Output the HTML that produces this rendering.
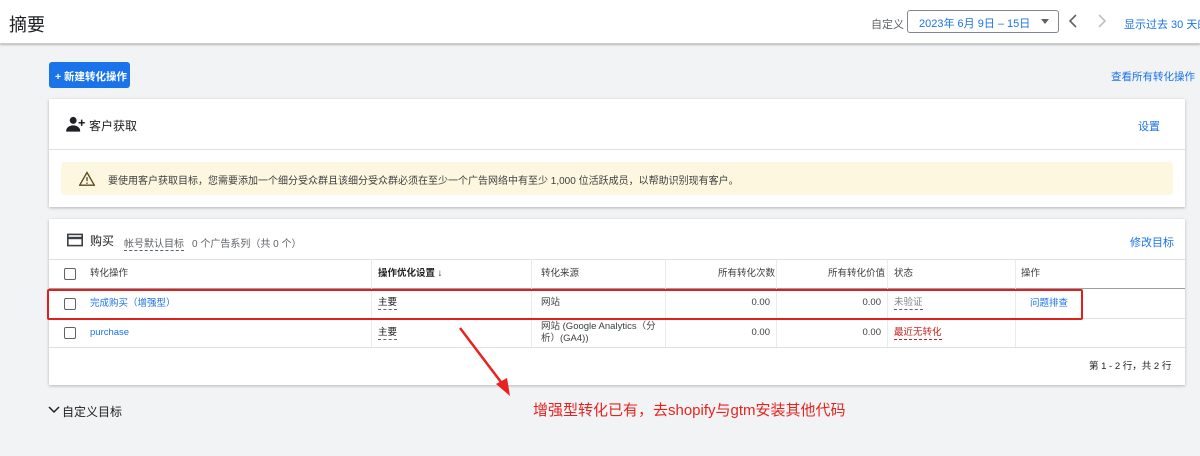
<!DOCTYPE html><html><head><meta charset="utf-8"><style>
*{box-sizing:border-box;margin:0;padding:0}
body{width:1200px;height:456px;overflow:hidden;background:#f1f3f4;font-family:"Liberation Sans","Noto Sans CJK SC",sans-serif;color:#3c4043;position:relative;font-size:12px}
.a{position:absolute}
.hdr{left:0;top:0;width:1200px;height:44px;background:#fff;border-bottom:1px solid #ccc;box-shadow:0 1px 2px rgba(0,0,0,.25)}
.blue{color:#1a73e8}
.card{background:#fff;box-shadow:0 1px 3px rgba(0,0,0,.25)}
.cb{width:12px;height:12px;border:1.5px solid #5f6368;border-radius:2px}
.vl{width:1px;background:#e8eaed}
.hl{height:1px;background:#e0e0e0}
.dot{border-bottom:1px dashed #5f6368}
.t{line-height:12px}
</style></head><body>
<div class="a hdr"></div>
<div class="a" style="left:9px;top:11px;font-size:18px;color:#202124">摘要</div>
<div class="a" style="left:871px;top:16px;font-size:11px;color:#5f6368">自定义</div>
<div class="a" style="left:907px;top:10px;width:152px;height:23px;border:1px solid #80868b;border-radius:3px;font-size:11px;color:#1a73e8;padding:4px 0 0 11px">2023年 6月 9日 – 15日<svg style="position:absolute;right:9px;top:8px" width="8" height="5"><path d="M0 0h8L4 5z" fill="#5f6368"/></svg></div>
<svg class="a" style="left:1068px;top:14px" width="10" height="14"><path d="M8 1L2 7l6 6" fill="none" stroke="#5f6368" stroke-width="1.6"/></svg>
<svg class="a" style="left:1097px;top:14px" width="10" height="14"><path d="M2 1l6 6-6 6" fill="none" stroke="#bdc1c6" stroke-width="1.6"/></svg>
<div class="a blue" style="left:1124px;top:16px;font-size:11px;white-space:nowrap">显示过去 30 天的</div>
<div class="a" style="left:49px;top:62px;width:81px;height:26px;background:#1a73e8;border-radius:3px;color:#fff;font-size:10.5px;padding:7px 0 0 6px;font-weight:bold">+ 新建转化操作</div>
<div class="a blue" style="left:1111px;top:69px;font-size:10.5px">查看所有转化操作</div>
<div class="a card" style="left:49px;top:99px;width:1136px;height:108px">
 <div class="a" style="left:17px;top:16px"><svg width="19" height="17" viewBox="0 0 24 22"><circle cx="9" cy="7" r="4.5" fill="#202124"/><path d="M0 20c0-4 5-6.5 9-6.5s9 2.5 9 6.5v1.5H0z" fill="#202124"/><path d="M19 6v3h-3v2h3v3h2v-3h3V9h-3V6z" fill="#202124"/></svg></div>
 <div class="a" style="left:40px;top:18px;font-size:12px;color:#202124">客户获取</div>
 <div class="a blue" style="left:1089px;top:19px;font-size:11px">设置</div>
 <div class="a hl" style="left:0;top:50px;width:1136px"></div>
 <div class="a" style="left:12px;top:63px;width:1112px;height:33px;background:#fef7e0;border-radius:4px"></div>
 <div class="a" style="left:30px;top:72px"><svg width="16" height="15" viewBox="0 0 24 22"><path d="M12 2L1 21h22z" fill="none" stroke="#5c4a1c" stroke-width="2"/><path d="M11 9h2v6h-2zM11 17h2v2h-2z" fill="#5c4a1c"/></svg></div>
 <div class="a" style="left:59px;top:73px;font-size:10px;color:#3c4043;white-space:nowrap">要使用客户获取目标，您需要添加一个细分受众群且该细分受众群必须在至少一个广告网络中有至少 1,000 位活跃成员，以帮助识别现有客户。</div>
</div>
<div class="a card" style="left:49px;top:219px;width:1136px;height:166px">
 <div class="a" style="left:18px;top:14px"><svg width="16" height="14" viewBox="0 0 20 16"><rect x="1" y="1" width="18" height="14" fill="none" stroke="#3c4043" stroke-width="2"/><rect x="1" y="4" width="18" height="3" fill="#3c4043"/></svg></div>
 <div class="a" style="left:41px;top:13px;font-size:12px;color:#202124">购买</div>
 <div class="a dot" style="left:75px;top:16px;font-size:10px;color:#5f6368">帐号默认目标</div>
 <div class="a" style="left:143px;top:16px;font-size:10px;color:#5f6368">0 个广告系列（共 0 个）</div>
 <div class="a blue" style="left:1081px;top:15px;font-size:11px">修改目标</div>
 <div class="a hl" style="left:0;top:40px;width:1136px"></div>
 <div class="a hl" style="left:0;top:69px;width:1136px;background:#9aa0a6"></div>
 <div class="a hl" style="left:0;top:99px;width:1136px"></div>
 <div class="a hl" style="left:0;top:128px;width:1136px"></div>
 <div class="a vl" style="left:322px;top:40px;height:88px"></div>
 <div class="a vl" style="left:482px;top:40px;height:88px"></div>
 <div class="a vl" style="left:616px;top:40px;height:88px"></div>
 <div class="a vl" style="left:727px;top:40px;height:88px"></div>
 <div class="a vl" style="left:838px;top:40px;height:88px"></div>
 <div class="a vl" style="left:966px;top:40px;height:88px"></div>
 <div class="a cb" style="left:15px;top:49px"></div>
 <div class="a cb" style="left:15px;top:79px"></div>
 <div class="a cb" style="left:15px;top:108px"></div>
 <div style="font-size:9.5px">
 <div class="a t" style="left:41px;top:49px">转化操作</div>
 <div class="a t" style="left:329px;top:49px;font-weight:bold;color:#202124">操作优化设置 ↓</div>
 <div class="a t" style="left:492px;top:49px">转化来源</div>
 <div class="a t" style="left:669px;top:49px">所有转化次数</div>
 <div class="a t" style="left:779px;top:49px">所有转化价值</div>
 <div class="a t" style="left:845px;top:49px">状态</div>
 <div class="a t" style="left:972px;top:49px">操作</div>
 <div class="a t blue" style="left:41px;top:79px">完成购买（增强型）</div>
 <div class="a t dot" style="left:329px;top:78px;color:#202124">主要</div>
 <div class="a t" style="left:492px;top:78px">网站</div>
 <div class="a t" style="left:672px;top:78px;width:49px;text-align:right">0.00</div>
 <div class="a t" style="left:782px;top:78px;width:50px;text-align:right">0.00</div>
 <div class="a t dot" style="left:845px;top:78px;color:#80868b">未验证</div>
 <div class="a t blue" style="left:981px;top:79px">问题排查</div>
 <div class="a t blue" style="left:41px;top:108px">purchase</div>
 <div class="a t dot" style="left:329px;top:108px;color:#202124">主要</div>
 <div class="a t" style="left:492px;top:102px">网站 (Google Analytics（分<br>析）(GA4))</div>
 <div class="a t" style="left:672px;top:108px;width:49px;text-align:right">0.00</div>
 <div class="a t" style="left:782px;top:108px;width:50px;text-align:right">0.00</div>
 <div class="a t" style="left:845px;top:108px;color:#c5221f;border-bottom:1px dashed #c5221f">最近无转化</div>
 <div class="a t" style="left:1040px;top:142px;color:#202124">第 1 - 2 行，共 2 行</div>
 </div>
</div>
<div class="a" style="left:47px;top:289px;width:1036px;height:31px;border:2px solid #e0201c;border-radius:2px"></div>
<svg class="a" style="left:450px;top:320px" width="70" height="85"><line x1="10" y1="8" x2="54" y2="66" stroke="#e8231f" stroke-width="2.5"/><path d="M46 64L60 76L57 58z" fill="#e8231f"/></svg>
<svg class="a" style="left:48px;top:406px" width="12" height="8"><path d="M1 1l5 5 5-5" fill="none" stroke="#202124" stroke-width="1.5"/></svg>
<div class="a" style="left:62px;top:403px;font-size:12px;color:#202124">自定义目标</div>
<div class="a" style="left:533px;top:399px;font-size:15px;color:#e8231f;white-space:nowrap">增强型转化已有，去shopify与gtm安装其他代码</div>
</body></html>
